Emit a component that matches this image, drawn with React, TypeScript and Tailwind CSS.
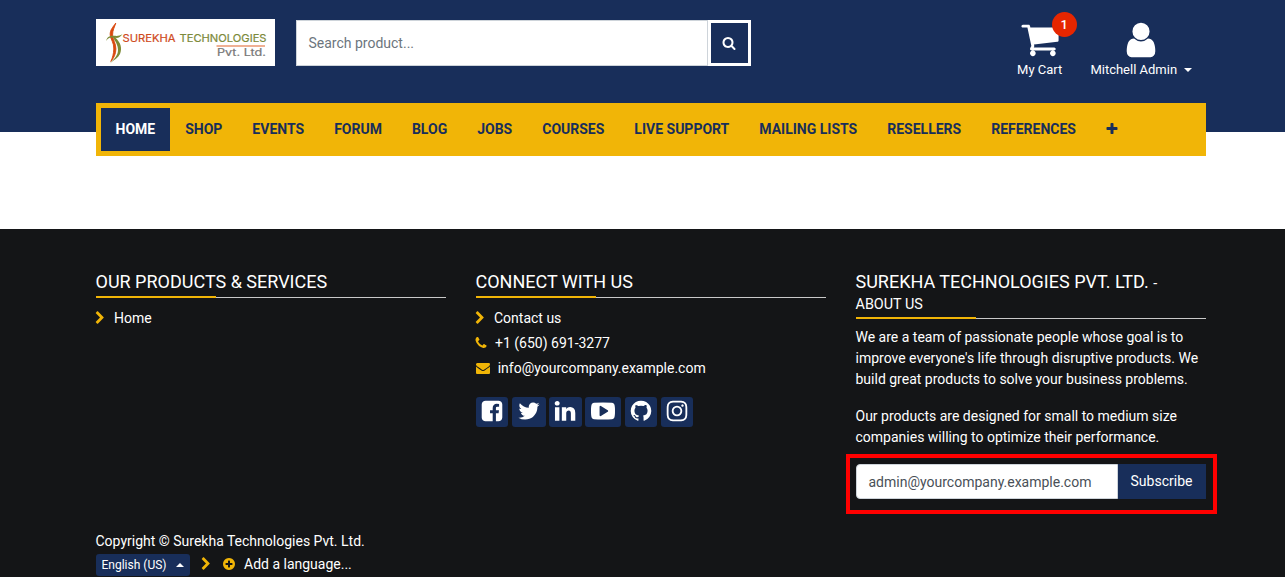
import React from "react";

const paths = {
  search:
    "M1216 832q0-185-131.5-316.5t-316.5-131.5-316.5 131.5-131.5 316.5 131.5 316.5 316.5 131.5 316.5-131.5 131.5-316.5zm512 832q0 52-38 90t-90 38q-54 0-90-38l-343-342q-179 124-399 124-143 0-273.5-55.5t-225-150-150-225-55.5-273.5 55.5-273.5 150-225 225-150 273.5-55.5 273.5 55.5 225 150 150 225 55.5 273.5q0 220-124 399l343 343q37 37 37 90z",
  chevron:
    "M1363 877l-742 742q-19 19-45 19t-45-19l-166-166q-19-19-19-45t19-45l531-531-531-531q-19-19-19-45t19-45l166-166q19-19 45-19t45 19l742 742q19 19 19 45t-19 45z",
  phone:
    "M1600 1240q0 27-10 70.5t-21 68.5q-21 50-122 106-94 51-186 51-27 0-53-3.5t-57.5-12.5-47-14.5-55.5-20.5-49-18q-98-35-175-83-127-79-264-216t-216-264q-48-77-83-175-3-9-18-49t-20.5-55.5-14.5-47-12.5-57.5-3.5-53q0-92 51-186 56-101 106-122 25-11 68.5-21t70.5-10q14 0 21 3 18 6 53 76 11 19 30 54t35 63.5 31 53.5q3 4 17.5 25t21.5 35.5 7 28.5q0 20-28.5 50t-62 55-62 53-28.5 46q0 9 5 22.5t8.5 20.5 14 24 11.5 19q76 137 174 235t235 174q2 1 19 11.5t24 14 20.5 8.5 22.5 5q18 0 46-28.5t53-62 55-62 50-28.5q14 0 28.5 7t35.5 21.5 25 17.5q25 15 53.5 31t63.5 35 54 30q70 35 76 53 3 7 3 21z",
  envelope:
    "M1792 710v794q0 66-47 113t-113 47h-1472q-66 0-113-47t-47-113v-794q44 49 101 87 362 246 497 345 57 42 92.5 65.5t94.5 48 110 24.5h2q51 0 110-24.5t94.5-48 92.5-65.5q170-123 498-345 57-39 100-87zm0-294q0 79-49 151t-122 123q-376 261-468 325-10 7-42.5 31t-54 38.5-52 32.5-57.5 27-50 9h-2q-23 0-50-9t-57.5-27-52-32.5-54-38.5-42.5-31q-91-64-262-182.5t-205-142.5q-62-42-117-115.5t-55-136.5q0-78 41.5-130t118.5-52h1472q65 0 112.5 47t47.5 113z",
  facebook:
    "M1376 128q119 0 203.5 84.5t84.5 203.5v960q0 119-84.5 203.5t-203.5 84.5h-188v-595h199l30-232h-229v-148q0-56 23.5-84t91.5-28l122-1v-207q-63-9-178-9-136 0-217.5 80t-81.5 226v171h-200v232h200v595h-532q-119 0-203.5-84.5t-84.5-203.5v-960q0-119 84.5-203.5t203.5-84.5h960z",
  twitter:
    "M1684 408q-67 98-162 167 1 14 1 42 0 130-38 259.5t-115.5 248.5-184.5 210.5-258 146-323 54.5q-271 0-496-145 35 4 78 4 225 0 401-138-105-2-188-64.5t-114-159.5q33 5 61 5 43 0 85-11-112-23-185.5-111.5t-73.5-205.5v-4q68 38 146 41-66-44-105-115t-39-154q0-88 44-163 121 149 294.5 238.5t371.5 99.5q-8-38-8-74 0-134 94.5-228.5t228.5-94.5q140 0 236 102 109-21 205-78-37 115-142 178 93-10 186-50z",
  linkedin:
    "M477 625v991h-330v-991h330zm21-306q1 73-50.5 122t-135.5 49h-2q-82 0-132-49t-50-122q0-74 51.5-122.5t134.5-48.5 133 48.5 51 122.5zm1166 729v568h-329v-530q0-105-40.5-164.5t-126.5-59.5q-63 0-105.5 34.5t-63.5 85.5q-11 30-11 81v553h-329q2-399 2-647t-1-296l-1-48h329v144h-2q20-32 41-56t56.5-52 87-43.5 114.5-15.5q171 0 275 113.5t104 332.5z",
  youtube:
    "M1280 896q0-37-30-54l-512-320q-31-20-65-2-33 18-33 56v640q0 38 33 56 16 8 31 8 20 0 34-10l512-320q30-17 30-54zm512 0q0 96-1 150t-8.5 136.5-22.5 147.5q-16 73-69 123t-124 58q-222 25-671 25t-671-25q-71-8-124.5-58t-69.5-123q-14-65-21.5-147.5t-8.5-136.5-1-150 1-150 8.5-136.5 22.5-147.5q16-73 69-123t124-58q222-25 671-25t671 25q71 8 124.5 58t69.5 123q14 65 21.5 147.5t8.5 136.5 1 150z",
  github:
    "M896 128q209 0 385.5 103t279.5 279.5 103 385.5q0 251-146.5 451.5t-378.5 277.5q-27 5-40-7t-13-30q0-3 .5-76.5t.5-134.5q0-97-52-142 57-6 102.5-18t94-39 81-66.5 53-105 20.5-150.5q0-119-79-206 37-91-8-204-28-9-81 11t-92 44l-38 24q-93-26-192-26t-192 26q-16-11-42.5-27t-83.5-38.5-85-13.5q-45 113-8 204-79 87-79 206 0 85 20.5 150t52.5 105 80.5 67 94 39 102.5 18q-39 36-49 103-21 10-45 15t-57 5-65.5-21.5-55.5-62.5q-19-32-48.5-52t-49.5-24l-20-3q-21 0-29 4.5t-5 11.5 9 14 13 12l7 5q22 10 43.5 38t31.5 51l10 23q13 38 44 61.5t67 30 69.5 7 55.5-3.5l23-4q0 38 .5 88.5t.5 54.5q0 18-13 30t-40 7q-232-77-378.5-277.5t-146.5-451.5q0-209 103-385.5t279.5-279.5 385.5-103z",
  instagram:
    "M1152 896q0-106-75-181t-181-75-181 75-75 181 75 181 181 75 181-75 75-181zm138 0q0 164-115 279t-279 115-279-115-115-279 115-279 279-115 279 115 115 279zm108-410q0 38-27 65t-65 27-65-27-27-65 27-65 65-27 65 27 27 65zm-502-220q-7 0-76.5-.5t-105.5 0-96.5 3-103 10-71.5 18.5q-50 20-88 58t-58 88q-11 29-18.5 71.5t-10 103-3 96.5 0 105.5.5 76.5-.5 76.5 0 105.5 3 96.5 10 103 18.5 71.5q20 50 58 88t88 58q29 11 71.5 18.5t103 10 96.5 3 105.5 0 76.5-.5 76.5.5 105.5 0 96.5-3 103-10 71.5-18.5q50-20 88-58t58-88q11-29 18.5-71.5t10-103 3-96.5 0-105.5-.5-76.5.5-76.5 0-105.5-3-96.5-10-103-18.5-71.5q-20-50-58-88t-88-58q-29-11-71.5-18.5t-103-10-96.5-3-105.5 0-76.5.5zm768 630q0 229-5 317-10 208-124 322t-322 124q-88 5-317 5t-317-5q-208-10-322-124t-124-322q-5-88-5-317t5-317q10-208 124-322t322-124q88-5 317-5t317 5q208 10 322 124t124 322q5 88 5 317z",
  plus:
    "M1600 736v192q0 40-28 68t-68 28h-416v416q0 40-28 68t-68 28h-192q-40 0-68-28t-28-68v-416h-416q-40 0-68-28t-28-68v-192q0-40 28-68t68-28h416v-416q0-40 28-68t68-28h192q40 0 68 28t28 68v416h416q40 0 68 28t28 68z",
  plusCircle:
    "M1344 960v-128q0-26-19-45t-45-19h-256v-256q0-26-19-45t-45-19h-128q-26 0-45 19t-19 45v256h-256q-26 0-45 19t-19 45v128q0 26 19 45t45 19h256v256q0 26 19 45t45 19h128q26 0 45-19t19-45v-256h256q26 0 45-19t19-45zm320-64q0 209-103 385.5t-279.5 279.5-385.5 103-385.5-103-279.5-279.5-103-385.5 103-385.5 279.5-279.5 385.5-103 385.5 103 279.5 279.5 103 385.5z",
  cart:
    "M704 1536q0 52-38 90t-90 38-90-38-38-90 38-90 90-38 90 38 38 90zm896 0q0 52-38 90t-90 38-90-38-38-90 38-90 90-38 90 38 38 90zm128-1088v512q0 24-16.5 42.5t-40.5 21.5l-1044 122q13 60 13 70 0 16-24 64h920q26 0 45 19t19 45-19 45-45 19h-1024q-26 0-45-19t-19-45q0-11 8-31.5t16-36 21.5-40 15.5-29.5l-177-823h-204q-26 0-45-19t-19-45 19-45 45-19h256q16 0 28.5 6.5t19.5 15.5 13 24.5 8 26 5.5 29.5 4.5 26h1201q26 0 45 19t19 45z",
  user:
    "M1536 1399q0 109-62.5 187t-150.5 78h-854q-88 0-150.5-78t-62.5-187q0-85 8.5-160.5t31.5-152 58.5-131 94-89 134.5-34.5q131 128 313 128t313-128q76 0 134.5 34.5t94 89 58.5 131 31.5 152 8.5 160.5zm-256-887q0 159-112.5 271.5t-271.5 112.5-271.5-112.5-112.5-271.5 112.5-271.5 271.5-112.5 271.5 112.5 112.5 271.5z",
};

function Icon({ name, className = "" }: { name: keyof typeof paths; className?: string }) {
  return (
    <svg viewBox="0 0 1792 1792" fill="currentColor" className={`shrink-0 ${className}`} aria-hidden="true">
      <path d={paths[name]} />
    </svg>
  );
}

function Logo() {
  return (
    <svg viewBox="0 0 179 47" className="h-[47px] w-[179px] shrink-0 bg-white" aria-label="Surekha Technologies Pvt. Ltd.">
      <path d="M19.800 4C17 8 13.800 11 14.200 16C14.600 20.500 18 23.500 17.800 30C17.600 35 16.500 39 14.800 42.500C18 39 19.800 35 19.900 30C20 24.500 16.800 20.500 16.600 16C16.400 11.500 18.600 8 19.800 4Z" fill="#d9480f" stroke="#d9480f" strokeWidth="0.9" />
      <path d="M10.300 22C10.600 18 14 16.400 18 16.800C21 17 23.500 17.200 26.500 15C24.500 18.300 22 19.200 19.500 18.800C24.500 23.500 26.500 29 24 35C22 39 18 41 13.800 44.500C18.500 39.500 22 36.500 22 31C22 26 19 22 17 18.600C13.500 18 11.500 19.500 10.300 22Z" fill="#7c8a35" />
      <g fontFamily="Inter, sans-serif" fontSize="10.8" fontWeight="400">
        <text x="26.500" y="23" fill="#cf4b1e" stroke="#cf4b1e" strokeWidth="0.2" textLength="53" lengthAdjust="spacingAndGlyphs">SUREKHA</text>
        <text x="83.500" y="23" fill="#7c8a3a" stroke="#7c8a3a" strokeWidth="0.2" textLength="87" lengthAdjust="spacingAndGlyphs">TECHNOLOGIES</text>
        <text x="121" y="37" fill="#777777" stroke="#777777" strokeWidth="0.2" fontSize="9.800" textLength="49" lengthAdjust="spacingAndGlyphs">Pvt. Ltd.</text>
      </g>
      <rect x="120.500" y="26" width="48.500" height="2" fill="#efb094" />
    </svg>
  );
}

function Heading({ children }: { children: React.ReactNode }) {
  return (
    <div>
      <h4 className="pb-[3.4px] text-lg leading-[21.2px]">{children}</h4>
      <div className="flex h-0.5 items-end">
        <div className="h-0.5 w-[120px] bg-[#f1b507]" />
        <div className="h-px flex-1 bg-[#c9c9c9]" />
      </div>
    </div>
  );
}

const navItems = ["SHOP", "EVENTS", "FORUM", "BLOG", "JOBS", "COURSES", "LIVE SUPPORT", "MAILING LISTS", "RESELLERS", "REFERENCES"];

const socials: { name: keyof typeof paths; size: string }[] = [
  { name: "facebook", size: "w-8 mr-1" },
  { name: "twitter", size: "w-[34px] mr-[3px]" },
  { name: "linkedin", size: "w-[33px] mr-[3px]" },
  { name: "youtube", size: "w-9 mr-1" },
  { name: "github", size: "w-8 mr-1" },
  { name: "instagram", size: "w-8" },
];

export default function App() {
  return (
    <div className="flex h-[577px] w-full flex-col overflow-hidden bg-white font-['Roboto',sans-serif] text-sm text-white">
      <header className="h-[132px] shrink-0 bg-[#182e5a] pl-[95.5px]">
        <div className="flex h-[103px] w-[1110px] items-start">
          <div className="pt-[19px]">
            <Logo />
          </div>
          <div className="ml-[21px] mt-5 flex h-[46px] w-[455px]">
            <div className="flex flex-1 items-center border border-[#ced4da] bg-white pl-3 text-[#6c757d]">Search product...</div>
            <button className="flex w-[43px] items-center justify-center border-[3px] border-white bg-[#182e5a]">
              <Icon name="search" className="size-3.5" />
            </button>
          </div>
          <div className="ml-auto flex pr-[13.4px] text-[13px] leading-5">
            <div className="relative flex w-[46px] flex-col items-center pt-5">
              <Icon name="cart" className="-mt-px mb-px size-10" />
              <span className="whitespace-nowrap">My Cart</span>
              <span className="absolute left-[35px] top-3 flex size-[25px] items-center justify-center rounded-full bg-[#e62600] font-medium">1</span>
            </div>
            <div className="ml-[27.7px] flex flex-col items-center pt-5">
              <Icon name="user" className="size-10" />
              <span className="flex items-center whitespace-nowrap">
                Mitchell Admin
                <i className="ml-[7px] border-x-4 border-t-4 border-x-transparent border-t-white" />
              </span>
            </div>
          </div>
        </div>
        <nav className="flex h-[53px] w-[1110px] bg-[#f1b507] p-[5px] font-bold text-[#182e5a]">
          <span className="flex h-[43px] items-center bg-[#182e5a] px-[15px] pb-0.5 text-white">HOME</span>
          {navItems.map((item) => (
            <span key={item} className="flex h-[43px] items-center px-[15px] pb-0.5">
              {item}
            </span>
          ))}
          <span className="flex h-[43px] items-center px-[13.7px] pb-0.5">
            <Icon name="plus" className="size-3.5" />
          </span>
        </nav>
      </header>

      <footer className="mt-[97px] flex-1 bg-[#141517] pl-[95.5px] pt-[42px]">
        <div className="grid h-[260px] w-[1110px] grid-cols-3 gap-[30px]">
          <section>
            <Heading>OUR PRODUCTS &amp; SERVICES</Heading>
            <div className="mt-2 flex h-[25px] items-center">
              <Icon name="chevron" className="-ml-[3px] size-3.5 text-[#f1b507]" />
              <span className="ml-[7.5px]">Home</span>
            </div>
          </section>

          <section>
            <Heading>CONNECT WITH US</Heading>
            <div className="mt-2 flex h-[25px] items-center">
              <Icon name="chevron" className="-ml-[3px] size-3.5 text-[#f1b507]" />
              <span className="ml-[7.5px]">Contact us</span>
            </div>
            <div className="flex h-[25px] items-center">
              <Icon name="phone" className="-ml-[1.5px] size-3.5 text-[#f1b507]" />
              <span className="ml-[7px]">+1 (650) 691-3277</span>
            </div>
            <div className="flex h-[25px] items-center">
              <Icon name="envelope" className="size-3.5 text-[#f1b507]" />
              <span className="ml-[8.2px]">info@yourcompany.example.com</span>
            </div>
            <div className="mt-4 flex">
              {socials.map((s) => (
                <span key={s.name} className={`flex h-[30px] items-center justify-center rounded-[3px] bg-[#182e5a] pb-px ${s.size}`}>
                  <Icon name={s.name} className="size-6" />
                </span>
              ))}
            </div>
          </section>

          <section>
            <Heading>
              SUREKHA TECHNOLOGIES PVT. LTD. <small className="text-[14.4px] leading-none">- ABOUT US</small>
            </Heading>
            <p className="mt-2 leading-[21px]">
              We are a team of passionate people whose goal is to improve everyone's life through disruptive products. We build great products to solve your business problems.
            </p>
            <p className="mt-4 leading-[21px]">Our products are designed for small to medium size companies willing to optimize their performance.</p>
            <div className="relative mt-[16.4px] flex h-[35px]">
              <div className="flex flex-1 items-center rounded-l border border-[#ced4da] bg-white pl-3 text-[#495057]">admin@yourcompany.example.com</div>
              <button className="w-[88px] bg-[#182e5a] pb-0.5">Subscribe</button>
              <div className="pointer-events-none absolute -bottom-[15px] -left-2.5 -right-[11px] -top-2.5 border-4 border-[#ff0000]" />
            </div>
          </section>
        </div>

        <div className="leading-[21px]">Copyright © Surekha Technologies Pvt. Ltd.</div>
        <div className="mt-0.5 flex h-[22px] items-center">
          <div className="flex h-[22px] w-[94px] items-center rounded-[3px] bg-[#182e5a] pl-1.5 text-xs">
            English (US)
            <i className="ml-[9px] border-x-4 border-b-4 border-x-transparent border-b-white" />
          </div>
          <Icon name="chevron" className="mb-0.5 ml-[9px] size-3.5 text-[#f1b507]" />
          <Icon name="plusCircle" className="mb-0.5 ml-[9.5px] size-3.5 text-[#f1b507]" />
          <span className="mb-0.5 ml-2">Add a language...</span>
        </div>
      </footer>
    </div>
  );
}
